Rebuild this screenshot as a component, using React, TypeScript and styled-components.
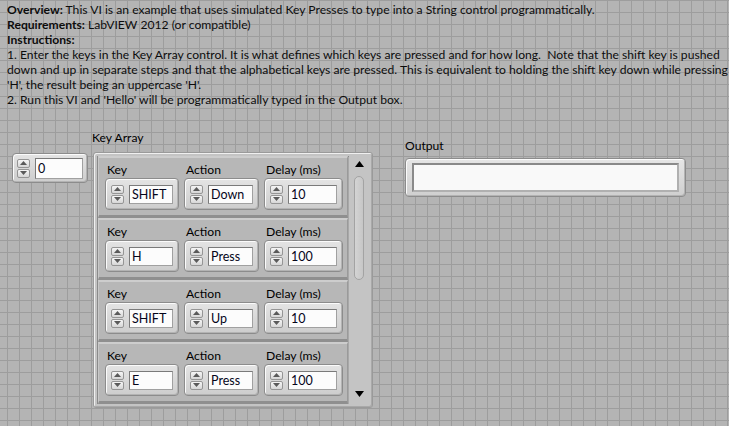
import React from "react";
import styled, { createGlobalStyle } from "styled-components";

const Global = createGlobalStyle`
  html, body { margin: 0; padding: 0; }
  body {
    width: 729px;
    height: 426px;
    overflow: hidden;
    font-family: Lato, "Noto Sans", "Liberation Sans", sans-serif;
    font-size: 12.15px;
    color: #000;
  }
`;

const Page = styled.div`
  width: 729px;
  height: 426px;
  box-sizing: border-box;
  background-color: #b4b4b4;
  background-image: linear-gradient(to right, #9d9d9d 1px, transparent 1px),
    linear-gradient(to bottom, #9d9d9d 1px, transparent 1px);
  background-size: 12px 12px;
  background-position: 7px 0;
  overflow: hidden;
`;

const Notes = styled.div`
  padding: 2px 0 0 7px;
  line-height: 15px;
  white-space: pre;
  color: #0c0c0c;
`;

const Strong = styled.b`
  font-weight: 700;
`;

const Panel = styled.div`
  display: flex;
  align-items: flex-start;
  padding-left: 12px;
  margin-top: 23px;
`;

const Label = styled.div`
  line-height: 15px;
  height: 15px;
  white-space: nowrap;
  color: #000;
`;

const IndexSlot = styled.div`
  margin-top: 23px;
`;

const ArrayColumn = styled.div`
  margin-left: 5px;
  display: flex;
  flex-direction: column;
  ${Label} {
    margin-left: -1px;
    margin-bottom: 7px;
  }
`;

const ArrayFrame = styled.div`
  width: 280px;
  height: 256px;
  box-sizing: border-box;
  display: flex;
  border: 1px solid #9a9a9a;
  border-radius: 3px;
  background: #c4c4c4;
  padding: 3px;
  box-shadow: inset 1px 1px 0 #f0f0f0, inset -1px -1px 0 #a9a9a9;
`;

const Elements = styled.div`
  width: 252px;
  height: 248px;
  overflow: hidden;
  display: flex;
  flex-direction: column;
  background: #a8a8a8;
  box-shadow: inset 1px 1px 0 #8a8a8a;
  padding-left: 1px;
  box-sizing: border-box;
`;

const ClusterBox = styled.div`
  flex: none;
  height: 62px;
  width: 250px;
  box-sizing: border-box;
  display: flex;
  gap: 5px;
  padding: 4px 0 0 6px;
  background: #b7b7b7;
  border-top: 2px solid #cdcdcd;
  border-left: 1px solid #c8c8c8;
  border-bottom: 3px solid #8f8f8f;
  border-right: 1px solid #9a9a9a;
`;

const Field = styled.div`
  display: flex;
  flex-direction: column;
  ${Label} {
    margin-left: 2px;
    margin-bottom: 1px;
  }
`;

const ControlShell = styled.div<{ $w: number; $h: number; $pad: number }>`
  width: ${(p) => p.$w}px;
  height: ${(p) => p.$h}px;
  box-sizing: border-box;
  display: flex;
  align-items: center;
  gap: 5px;
  padding: 0 ${(p) => p.$pad - 1}px;
  border: 1px solid #8c8c8c;
  border-radius: 4px;
  background: linear-gradient(#e4e4e4, #cdcdcd);
  box-shadow: inset 1px 1px 0 #fbfbfb, inset -1px -1px 0 #b3b3b3;
`;

const Spin = styled.div<{ $h: number }>`
  width: 13px;
  height: ${(p) => p.$h}px;
  display: flex;
  flex-direction: column;
  gap: 1px;
  flex: none;
`;

const SpinHalf = styled.div`
  flex: 1;
  box-sizing: border-box;
  border: 1px solid #959595;
  border-radius: 2px;
  background: linear-gradient(#f6f6f6, #d6d6d6);
  display: flex;
  align-items: center;
  justify-content: center;
`;

const TextField = styled.div<{ $h: number }>`
  flex: 1;
  height: ${(p) => p.$h}px;
  box-sizing: border-box;
  border: 1px solid #7a7a7a;
  border-right-color: #a0a0a0;
  border-bottom-color: #a0a0a0;
  background: #fcfcfc;
  padding-left: 2px;
  font-size: 12.5px;
  line-height: ${(p) => p.$h - 2}px;
  color: #05051a;
  white-space: nowrap;
  overflow: hidden;
`;

const Arrow = ({ up }: { up?: boolean }) => (
  <svg width="7" height="4" viewBox="0 0 7 4">
    <polygon points={up ? "0,4 7,4 3.5,0" : "0,0 7,0 3.5,4"} fill="#5a5a5a" />
  </svg>
);

const Numeric = ({
  value,
  w,
  h,
  pad,
  field,
  spin,
}: {
  value: string;
  w: number;
  h: number;
  pad: number;
  field: number;
  spin: number;
}) => (
  <ControlShell $w={w} $h={h} $pad={pad}>
    <Spin $h={spin}>
      <SpinHalf>
        <Arrow up />
      </SpinHalf>
      <SpinHalf>
        <Arrow />
      </SpinHalf>
    </Spin>
    <TextField $h={field}>{value}</TextField>
  </ControlShell>
);

const ScrollColumn = styled.div`
  width: 20px;
  height: 248px;
  display: flex;
  flex-direction: column;
  align-items: center;
  padding: 4px 0 6px;
  box-sizing: border-box;
`;

const ScrollArrow = styled.div`
  height: 8px;
  display: flex;
  align-items: center;
  justify-content: center;
`;

const Thumb = styled.div`
  margin-top: 8px;
  width: 10px;
  height: 104px;
  box-sizing: border-box;
  border: 1px solid #a3a3a3;
  border-radius: 5px;
  background: linear-gradient(to right, #d4d4d4, #c6c6c6);
`;

const Track = styled.div`
  flex: 1;
`;

const Black = ({ up }: { up?: boolean }) => (
  <svg width="9" height="6" viewBox="0 0 9 6">
    <polygon points={up ? "0,6 9,6 4.5,0" : "0,0 9,0 4.5,6"} fill="#000" />
  </svg>
);

const OutputColumn = styled.div`
  margin-left: 32px;
  margin-top: 8px;
  display: flex;
  flex-direction: column;
  ${Label} {
    margin-bottom: 5px;
  }
`;

const StringShell = styled.div`
  width: 281px;
  height: 39px;
  box-sizing: border-box;
  padding: 4px 6px;
  border: 1px solid #8c8c8c;
  border-radius: 4px;
  background: linear-gradient(#e6e6e6, #cfcfcf);
  box-shadow: inset 1px 1px 0 #fbfbfb, inset -1px -1px 0 #b3b3b3;
`;

const StringBox = styled.div`
  height: 100%;
  box-sizing: border-box;
  border: 2px solid #8a8a8a;
  border-right-color: #b0b0b0;
  border-bottom-color: #b0b0b0;
  background: #f9f9f9;
`;

const rows = [
  { key: "SHIFT", action: "Down", delay: "10" },
  { key: "H", action: "Press", delay: "100" },
  { key: "SHIFT", action: "Up", delay: "10" },
  { key: "E", action: "Press", delay: "100" },
];

const Cluster = ({ k, a, d }: { k: string; a: string; d: string }) => (
  <ClusterBox>
    <Field>
      <Label>Key</Label>
      <Numeric value={k} w={74} h={32} pad={6} field={19} spin={19} />
    </Field>
    <Field>
      <Label>Action</Label>
      <Numeric value={a} w={75} h={32} pad={6} field={19} spin={19} />
    </Field>
    <Field>
      <Label>Delay (ms)</Label>
      <Numeric value={d} w={79} h={32} pad={6} field={19} spin={19} />
    </Field>
  </ClusterBox>
);

export default function App() {
  return (
    <Page>
      <Global />
      <Notes>
        <Strong>Overview:</Strong> This VI is an example that uses simulated Key Presses to type into a String control programmatically.
        {"\n"}
        <Strong>Requirements:</Strong> LabVIEW 2012 (or compatible)
        {"\n"}
        <Strong>Instructions:</Strong>
        {"\n"}
        {"1. Enter the keys in the Key Array control. It is what defines which keys are pressed and for how long.  Note that the shift key is pushed"}
        {"\n"}
        {"down and up in separate steps and that the alphabetical keys are pressed. This is equivalent to holding the shift key down while pressing"}
        {"\n"}
        {"'H', the result being an uppercase 'H'."}
        {"\n"}
        {"2. Run this VI and 'Hello' will be programmatically typed in the Output box."}
      </Notes>
      <Panel>
        <IndexSlot>
          <Numeric value="0" w={76} h={30} pad={5} field={21} spin={19} />
        </IndexSlot>
        <ArrayColumn>
          <Label>Key Array</Label>
          <ArrayFrame>
            <Elements>
              {rows.map((r, i) => (
                <Cluster key={i} k={r.key} a={r.action} d={r.delay} />
              ))}
            </Elements>
            <ScrollColumn>
              <ScrollArrow>
                <Black up />
              </ScrollArrow>
              <Thumb />
              <Track />
              <ScrollArrow>
                <Black />
              </ScrollArrow>
            </ScrollColumn>
          </ArrayFrame>
        </ArrayColumn>
        <OutputColumn>
          <Label>Output</Label>
          <StringShell>
            <StringBox />
          </StringShell>
        </OutputColumn>
      </Panel>
    </Page>
  );
}
